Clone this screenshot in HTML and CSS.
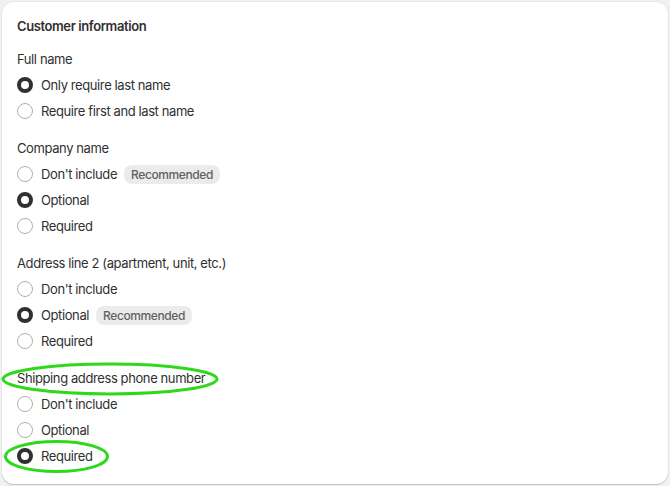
FILE: index.html
```html
<!DOCTYPE html>
<html>
<head>
<meta charset="utf-8">
<link rel="stylesheet" href="styles.css">
</head>
<body>
<div class="card">
  <h2 class="title">Customer information</h2>
  <div class="groups">
    <div class="group">
      <div class="heading">Full name</div>
      <label class="opt"><span class="radio checked"></span><span>Only require last name</span></label>
      <label class="opt"><span class="radio"></span><span>Require first and last name</span></label>
    </div>
    <div class="group">
      <div class="heading">Company name</div>
      <label class="opt"><span class="radio"></span><span>Don't include</span><span class="badge">Recommended</span></label>
      <label class="opt"><span class="radio checked"></span><span>Optional</span></label>
      <label class="opt"><span class="radio"></span><span>Required</span></label>
    </div>
    <div class="group">
      <div class="heading">Address line 2 (apartment, unit, etc.)</div>
      <label class="opt"><span class="radio"></span><span>Don't include</span></label>
      <label class="opt"><span class="radio checked"></span><span>Optional</span><span class="badge">Recommended</span></label>
      <label class="opt"><span class="radio"></span><span>Required</span></label>
    </div>
    <div class="group">
      <div class="heading">Shipping address phone number</div>
      <label class="opt"><span class="radio"></span><span>Don't include</span></label>
      <label class="opt"><span class="radio"></span><span>Optional</span></label>
      <label class="opt"><span class="radio checked"></span><span>Required</span></label>
    </div>
  </div>
</div>
<svg class="marks" width="670" height="486" viewBox="0 0 670 486">
  <ellipse cx="110" cy="379" rx="107" ry="15" fill="none" stroke="#2fd81a" stroke-width="3"/>
  <ellipse cx="56.5" cy="456.5" rx="51" ry="15" fill="none" stroke="#2fd81a" stroke-width="3"/>
</svg>
</body>
</html>
```
FILE: styles.css
```css
html, body {
  margin: 0;
  padding: 0;
  background: #f1f1f1;
}
body {
  width: 670px;
  height: 486px;
  overflow: hidden;
  position: relative;
  font-family: Inter, "Noto Sans", sans-serif;
  font-size: 13px;
  letter-spacing: -0.4px;
  color: #303030;
}
.card {
  margin: 2px;
  width: 666px;
  height: 482px;
  box-sizing: border-box;
  background: #fff;
  border-radius: 12px;
  box-shadow: 0 1px 0 rgba(26,26,26,0.07), 0 1px 1px rgba(0,0,0,0.12), 0 0 0 1px rgba(0,0,0,0.03);
  padding: 14px 15px;
}
.title {
  margin: 0;
  font-size: 13px;
  line-height: 20px;
  font-weight: 600;
  color: #303030;
}
.groups {
  margin-top: 13px;
  display: flex;
  flex-direction: column;
  gap: 17px;
}
.group {
  display: flex;
  flex-direction: column;
  gap: 6px;
}
.heading {
  line-height: 20px;
}
.opt {
  display: flex;
  align-items: center;
  height: 20px;
  line-height: 20px;
}
.radio {
  width: 16px;
  height: 16px;
  box-sizing: border-box;
  border-radius: 50%;
  border: 1px solid #b0b0b0;
  background: #fff;
  margin-right: 8px;
  flex: none;
}
.radio.checked {
  border: 4.5px solid #303030;
}
.badge {
  margin-left: 7px;
  background: #ebebeb;
  color: #616161;
  font-size: 12px;
  font-weight: 550;
  letter-spacing: -0.4px;
  line-height: 19px;
  height: 19px;
  padding: 0 7px;
  border-radius: 8px;
}
.marks {
  position: absolute;
  left: 0;
  top: 0;
  pointer-events: none;
}
```
